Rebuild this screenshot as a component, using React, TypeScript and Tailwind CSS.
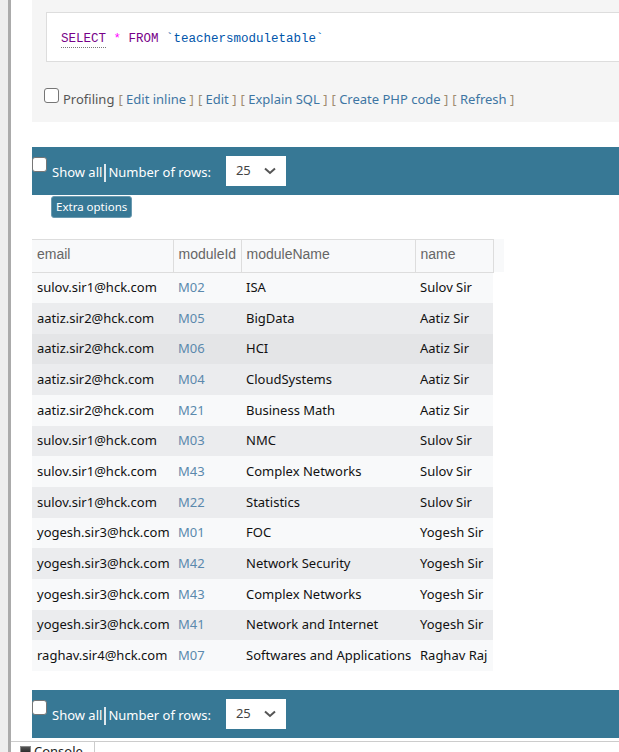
const rows = [
  ["sulov.sir1@hck.com", "M02", "ISA", "Sulov Sir"],
  ["aatiz.sir2@hck.com", "M05", "BigData", "Aatiz Sir"],
  ["aatiz.sir2@hck.com", "M06", "HCI", "Aatiz Sir"],
  ["aatiz.sir2@hck.com", "M04", "CloudSystems", "Aatiz Sir"],
  ["aatiz.sir2@hck.com", "M21", "Business Math", "Aatiz Sir"],
  ["sulov.sir1@hck.com", "M03", "NMC", "Sulov Sir"],
  ["sulov.sir1@hck.com", "M43", "Complex Networks", "Sulov Sir"],
  ["sulov.sir1@hck.com", "M22", "Statistics", "Sulov Sir"],
  ["yogesh.sir3@hck.com", "M01", "FOC", "Yogesh Sir"],
  ["yogesh.sir3@hck.com", "M42", "Network Security", "Yogesh Sir"],
  ["yogesh.sir3@hck.com", "M43", "Complex Networks", "Yogesh Sir"],
  ["yogesh.sir3@hck.com", "M41", "Network and Internet", "Yogesh Sir"],
  ["raghav.sir4@hck.com", "M07", "Softwares and Applications", "Raghav Raj"],
];

const Checkbox = () => (
  <span className="inline-block w-[15px] h-[15px] bg-white border border-[#767676] rounded-[3px]" />
);

const NavBar = () => (
  <div className="h-[48px] bg-[#377895] flex items-center text-white text-[13px]">
    <div className="self-start mt-[10px]">
      <Checkbox />
    </div>
    <span className="ml-[5px] mt-[3px]">Show all</span>
    <span className="w-[2px] h-[18px] bg-[#dfe8ee] mx-[2px] mt-[3px]" />
    <span className="mt-[3px]">Number of rows:</span>
    <div className="ml-[15px] w-[60px] h-[30px] bg-white flex items-center justify-between px-[10px] text-[#444]">
      <span>25</span>
      <svg width="12" height="8" viewBox="0 0 12 8">
        <path d="M1 1.5 L6 6 L11 1.5" fill="none" stroke="#555" strokeWidth="2" />
      </svg>
    </div>
  </div>
);

const Link = ({ children }: { children: string }) => (
  <span>
    <span className="text-[#a08c70]">[</span>{" "}
    <span className="text-[#3e75a3]">{children}</span>{" "}
    <span className="text-[#a08c70]">]</span>
  </span>
);

export default function App() {
  return (
    <div className="w-[619px] h-[752px] overflow-hidden flex bg-white" style={{ fontFamily: '"Noto Sans", sans-serif' }}>
      <div className="w-[8px] bg-[#eeeeee] shrink-0" />
      <div className="w-[3px] bg-[#ababab] shrink-0" />
      <div className="flex-1 min-w-0">
        <div className="ml-[21px] bg-[#f5f5f5] h-[122px] pt-[12px] pl-[14px]">
          <div className="h-[50px] bg-white border border-[#ddd] border-r-0 flex items-center pl-[14px] pt-[5px] text-[12.5px]" style={{ fontFamily: '"Liberation Mono", monospace' }}>
            <span className="text-[#770088] border-b border-dotted border-[#777] leading-[15px]">SELECT</span>
            <span className="text-[#ff00ff] ml-[7.5px]">*</span>
            <span className="text-[#770088] ml-[7.5px]">FROM</span>
            <span className="text-[#0055aa] ml-[7.5px]">`teachersmoduletable`</span>
          </div>
          <div className="mt-[26px] -ml-[2px] flex items-center text-[13px] text-[#555] gap-[4px] whitespace-nowrap">
            <div className="self-start">
              <Checkbox />
            </div>
            <span className="mt-[2px]">Profiling</span>
            <span className="mt-[2px] flex gap-[4px]">
              <Link>Edit inline</Link>
              <Link>Edit</Link>
              <Link>Explain SQL</Link>
              <Link>Create PHP code</Link>
              <Link>Refresh</Link>
            </span>
          </div>
        </div>

        <div className="ml-[21px] mt-[25px]">
          <NavBar />
          <div className="ml-[19px] mt-[1px] w-fit bg-[#377895] text-white text-[11.5px] px-[4px] h-[22px] leading-[20px] rounded-[3px] border border-[#6a9ab0]">
            Extra options
          </div>
          <div className="mt-[21px] flex">
            <table className="border-collapse text-[13px]">
              <thead>
                <tr className="h-[33px] bg-[#f8f9fa] text-[#666]" style={{ fontFamily: '"Liberation Sans", sans-serif' }}>
                  <th className="w-[141px] font-normal text-left pl-[5px] pb-[3px] border border-[#dddddd] border-l-0 text-[14px]">email</th>
                  <th className="w-[68px] font-normal text-left pl-[5px] pb-[3px] border border-[#dddddd] text-[14px]">moduleId</th>
                  <th className="w-[174px] font-normal text-left pl-[5px] pb-[3px] border border-[#dddddd] text-[14px]">moduleName</th>
                  <th className="w-[78px] font-normal text-left pl-[5px] pb-[3px] border border-[#dddddd] text-[14px]">name</th>
                </tr>
              </thead>
              <tbody>
                {rows.map((r, i) => (
                  <tr
                    key={i}
                    className={
                      i === 2
                        ? "h-[30.67px] bg-[#e4e5e7]"
                        : i % 2 === 0
                        ? "h-[30.67px] bg-[#f8f9fa]"
                        : "h-[30.67px] bg-[#ebecee]"
                    }
                  >
                    <td className="pl-[5px] text-[#111] whitespace-nowrap">{r[0]}</td>
                    <td className="pl-[5px] text-[#5b89ad]">{r[1]}</td>
                    <td className="pl-[5px] text-[#111] whitespace-nowrap">{r[2]}</td>
                    <td className="pl-[5px] text-[#111] whitespace-nowrap">{r[3]}</td>
                  </tr>
                ))}
              </tbody>
            </table>
            <div className="w-[10px] h-[33px] bg-[#f8f9fa]" />
          </div>
          <div className="mt-[19px]">
            <NavBar />
          </div>
        </div>

        <div className="mt-[3px] border-t border-[#cccccc] h-[20px]">
          <div className="w-[84px] h-[14px] border-r border-[#cccccc] flex items-start pl-[9px] pt-[1px] gap-[3px] text-[13px] text-[#222] leading-[16px]">
            <span className="w-[11px] h-[11px] bg-gradient-to-b from-[#555] to-[#111] border border-[#888] mt-[3px]" />
            <span>Console</span>
          </div>
        </div>
      </div>
    </div>
  );
}
